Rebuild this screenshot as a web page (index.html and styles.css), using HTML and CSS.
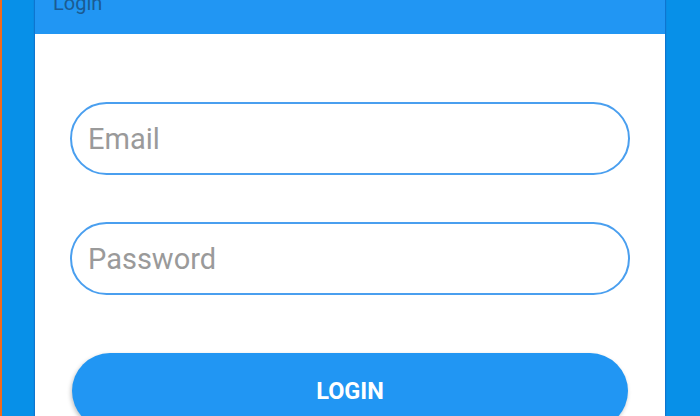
FILE: index.html
```html
<!DOCTYPE html>
<html lang="en">
<head>
    <meta charset="UTF-8">
    <meta name="viewport" content="width=device-width, initial-scale=1.0">
    <title>Login</title>
    <link rel="stylesheet" href="styles.css">
</head>
<body>

<div class="card">
    <header class="toolbar">
        <span class="toolbar-title">Login</span>
    </header>

    <form class="login-form">
        <input type="email" class="field" placeholder="Email">
        <input type="password" class="field" placeholder="Password">
        <button type="button" class="login-button">LOGIN</button>
    </form>
</div>

</body>
</html>
```

FILE: styles.css
```css
html, body {
    height: 100%;
}

body {
    margin: 0;
    font-family: Roboto, 'Noto Sans', sans-serif;
    background: #0790e8;
    border-left: 2px solid #f06a1c;
    padding: 0 35px 0 33px;
    overflow: hidden;
    box-sizing: border-box;
}

.card {
    background: #fff;
    height: 100%;
    box-shadow: 0 0 1px 1px rgba(20, 100, 190, 0.6);
}

.toolbar {
    height: 34px;
    background: #2196f3;
    padding-left: 18px;
    overflow: hidden;
}

.toolbar-title {
    display: block;
    margin-top: -9px;
    font-size: 20px;
    line-height: 24px;
    color: #1b5b91;
}

.login-form {
    display: flex;
    flex-direction: column;
    padding: 68px 35px 0;
}

.field {
    height: 73px;
    padding: 0 16px;
    border: 2px solid #4a9fef;
    border-radius: 37px;
    font-family: inherit;
    font-size: 29px;
    color: #333;
    background: #fff;
    outline: none;
    box-sizing: border-box;
}

.field::placeholder {
    color: #9a9a9a;
}

.field + .field {
    margin-top: 47px;
}

.login-button {
    margin: 58px 2px 0;
    height: 76px;
    border: none;
    border-radius: 38px;
    background: #2196f3;
    color: #fff;
    font-family: inherit;
    font-size: 23.5px;
    font-weight: bold;
    box-shadow: -1px 2px 4px rgba(0, 0, 0, 0.25);
    cursor: pointer;
}
```
